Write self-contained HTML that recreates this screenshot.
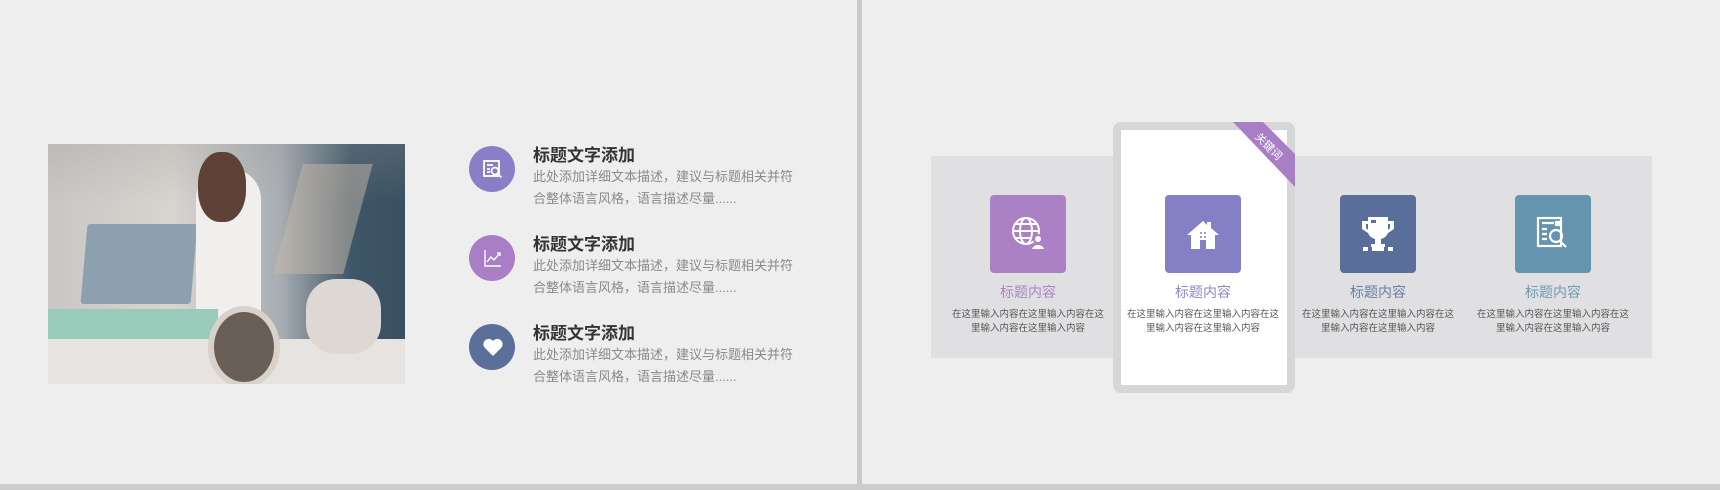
<!DOCTYPE html>
<html><head><meta charset="utf-8"><style>
body{margin:0;width:1720px;height:490px;background:#efeeef;position:relative;overflow:hidden;font-family:"Liberation Sans","Noto Sans CJK SC",sans-serif}
.a{position:absolute}
.photo{left:48px;top:144px;width:357px;height:240px;background:linear-gradient(90deg,#c9c6c4 0%,#d8d4cf 35%,#a9aeb3 65%,#3d5668 85%,#3a5060 100%);overflow:hidden}
.circ{width:46px;height:46px;border-radius:50%;left:469px}
.t{left:533px;font-size:17px;font-weight:bold;color:#333}
.d{left:533px;font-size:13px;color:#8a8a8a;line-height:22px;width:260px}
.sq{width:76px;height:78px;border-radius:4px;top:195px}
.ct{font-size:14px;width:170px;text-align:center;top:282px}
.cd{font-size:9.5px;color:#555;width:170px;text-align:center;top:308px;line-height:14px}
</style></head><body>
<div class="a" style="left:857px;top:0;width:5px;height:490px;background:#c9c9c9"></div>
<div class="a" style="left:0;top:484px;width:1720px;height:6px;background:#cdcdcd"></div>

<div class="a photo">
 <div class="a" style="left:0;top:0;width:357px;height:60px;background:linear-gradient(180deg,rgba(150,150,150,.25),rgba(0,0,0,0))"></div>
 <div class="a" style="left:36px;top:80px;width:110px;height:80px;background:#8da0ae;transform:skewX(-5deg);border-radius:3px"></div>
 <div class="a" style="left:148px;top:25px;width:65px;height:150px;background:#f1eeee;border-radius:30px 30px 10px 10px"></div>
 <div class="a" style="left:150px;top:8px;width:48px;height:70px;background:#5e4238;border-radius:45%"></div>
 <div class="a" style="left:240px;top:20px;width:70px;height:110px;background:#c8b8a8;opacity:.5;transform:skewX(-15deg)"></div>
 <div class="a" style="left:0;top:165px;width:170px;height:40px;background:#98cbba"></div>
 <div class="a" style="left:0;top:195px;width:357px;height:45px;background:#e6e3e0"></div>
 <div class="a" style="left:258px;top:135px;width:75px;height:75px;background:#ddd8d3;border-radius:40%"></div>
 <div class="a" style="left:160px;top:162px;width:60px;height:70px;background:#6a5f57;border-radius:50%;border:6px solid #d8d2cb"></div>
</div>

<div class="a circ" style="top:146px;background:#8a7fc6"></div>
<svg class="a" style="left:482px;top:159px" width="22" height="22" viewBox="0 0 22 22" fill="none" stroke="#fff" stroke-width="1.8"><rect x="2" y="2" width="15" height="15"/><path d="M5 6h6M5 10h3M5 13h3"/><circle cx="13" cy="12" r="3.5"/><path d="M15.5 14.5l4 4"/></svg>
<div class="a t" style="top:141px">标题文字添加</div>
<div class="a d" style="top:166px">此处添加详细文本描述，建议与标题相关并符<br>合整体语言风格，语言描述尽量......</div>

<div class="a circ" style="top:235px;background:#a97ec6"></div>
<svg class="a" style="left:482px;top:247px" width="22" height="22" viewBox="0 0 22 22" fill="none" stroke="#fff" stroke-width="1.4"><path d="M3 3v16h16M5 15l4-5 3 3 5-6M15 6h3v3"/></svg>
<div class="a t" style="top:230px">标题文字添加</div>
<div class="a d" style="top:255px">此处添加详细文本描述，建议与标题相关并符<br>合整体语言风格，语言描述尽量......</div>

<div class="a circ" style="top:324px;background:#5a6f9a"></div>
<svg class="a" style="left:482px;top:337px" width="22" height="20" viewBox="0 0 22 20"><path d="M11 19L2.5 10.5A5 5 0 0 1 11 4a5 5 0 0 1 8.5 6.5z" fill="#fff"/></svg>
<div class="a t" style="top:319px">标题文字添加</div>
<div class="a d" style="top:344px">此处添加详细文本描述，建议与标题相关并符<br>合整体语言风格，语言描述尽量......</div>

<div class="a" style="left:931px;top:156px;width:721px;height:202px;background:#e0dfe1"></div>
<div class="a" style="left:1113px;top:122px;width:182px;height:271px;background:#d6d6d6;border-radius:8px"></div>
<div class="a" style="left:1121px;top:130px;width:166px;height:255px;background:#fff"></div>
<svg class="a" style="left:1113px;top:122px" width="182" height="80"><polygon points="120,0 150,0 182,32 182,65" fill="#a87fc5"/><text x="0" y="0" transform="translate(153,27) rotate(45)" fill="#fff" font-size="11" text-anchor="middle" font-family="Noto Sans CJK SC">关键词</text></svg>

<div class="a sq" style="left:990px;background:#ab80c4"></div>
<svg class="a" style="left:1010px;top:215px" width="38" height="38" viewBox="0 0 38 38" fill="none" stroke="#fff" stroke-width="2"><circle cx="16" cy="16" r="13"/><ellipse cx="16" cy="16" rx="6" ry="13"/><path d="M3 16h26M5 9h22M5 23h16"/><circle cx="28" cy="24" r="4" fill="#fff" stroke="#ab80c4"/><path d="M21 35a7 6 0 0 1 14 0z" fill="#fff" stroke="#ab80c4"/></svg>
<div class="a ct" style="left:943px;color:#a886c4">标题内容</div>
<div class="a cd" style="left:943px">在这里输入内容在这里输入内容在这<br>里输入内容在这里输入内容</div>

<div class="a sq" style="left:1165px;background:#8580c6"></div>
<svg class="a" style="left:1185px;top:218px" width="36" height="32" viewBox="0 0 36 32"><path d="M18 3L2 17h4v14h9v-9h6v9h9V17h4L26 10V4h-4v3z" fill="#fff"/><circle cx="16" cy="15" r="1" fill="#8580c6"/><circle cx="20" cy="15" r="1" fill="#8580c6"/><circle cx="16" cy="19" r="1" fill="#8580c6"/><circle cx="20" cy="19" r="1" fill="#8580c6"/></svg>
<div class="a ct" style="left:1118px;color:#8c8ac4">标题内容</div>
<div class="a cd" style="left:1118px">在这里输入内容在这里输入内容在这<br>里输入内容在这里输入内容</div>

<div class="a sq" style="left:1340px;background:#596e9b"></div>
<svg class="a" style="left:1360px;top:215px" width="36" height="38" viewBox="0 0 36 38" fill="#fff"><path d="M8 2h20v4h6v8l-6 4a10 10 0 0 1-7 6v5h4v3H11v-3h4v-5a10 10 0 0 1-7-6L2 14V6h6z M6 9v4l2 2V9z M28 9v6l2-2V9z"/><rect x="3" y="32" width="5" height="4"/><rect x="28" y="32" width="5" height="4"/><rect x="12" y="30" width="12" height="6"/><rect x="11" y="5" width="5" height="3" fill="#596e9b"/></svg>
<div class="a ct" style="left:1293px;color:#6a7ea8">标题内容</div>
<div class="a cd" style="left:1293px">在这里输入内容在这里输入内容在这<br>里输入内容在这里输入内容</div>

<div class="a sq" style="left:1515px;background:#6594ae"></div>
<svg class="a" style="left:1535px;top:215px" width="38" height="38" viewBox="0 0 38 38" fill="none" stroke="#fff" stroke-width="2.2"><rect x="3" y="3" width="23" height="28"/><path d="M7 8h12M7 14h5M7 19h5M7 24h5"/><rect x="21" y="7" width="3" height="3" fill="#fff"/><circle cx="21" cy="21" r="6"/><path d="M25 26l6 6"/></svg>
<div class="a ct" style="left:1468px;color:#6f9ab4">标题内容</div>
<div class="a cd" style="left:1468px">在这里输入内容在这里输入内容在这<br>里输入内容在这里输入内容</div>
</body></html>
